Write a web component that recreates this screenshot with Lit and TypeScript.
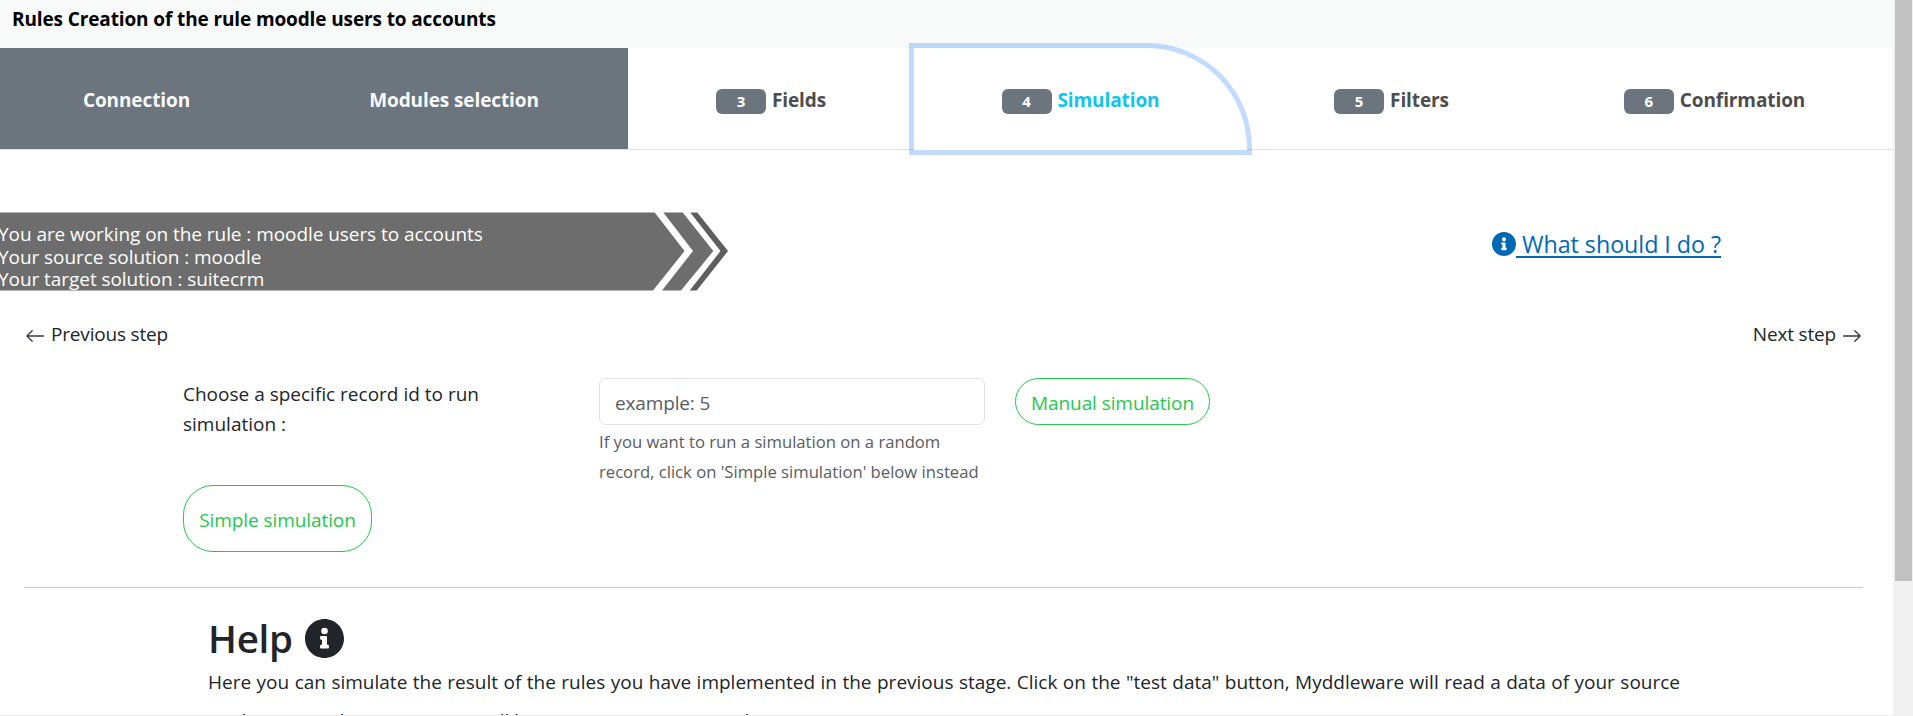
import { LitElement, html, css } from "lit";
import { customElement, state } from "lit/decorators.js";
import { classMap } from "lit/directives/class-map.js";

interface Step {
  n: number;
  label: string;
  state: "done" | "active" | "todo";
}

const infoIcon = html`<svg class="info" viewBox="8 8 496 496" aria-hidden="true">
  <path fill="currentColor" d="M256 8C119 8 8 119 8 256s111 248 248 248 248-111 248-248S393 8 256 8zm0 110a42 42 0 1 1 0 84 42 42 0 0 1 0-84zm56 254c0 7-5 12-12 12h-88c-7 0-12-5-12-12v-24c0-7 5-12 12-12h12v-64h-12c-7 0-12-5-12-12v-24c0-7 5-12 12-12h64c7 0 12 5 12 12v100h12c7 0 12 5 12 12z"/>
</svg>`;

const arrowLeft = html`<svg class="arrow" viewBox="0 0 18 12" aria-hidden="true">
  <path d="M17.6 6H1M6.2 .7.9 6l5.3 5.3"/>
</svg>`;

const arrowRight = html`<svg class="arrow" viewBox="0 0 18 12" aria-hidden="true">
  <path d="M.4 6H17M11.8 .7 17.1 6l-5.3 5.3"/>
</svg>`;

@customElement("app-root")
export class AppRoot extends LitElement {
  @state() private steps: Step[] = [
    { n: 1, label: "Connection", state: "done" },
    { n: 2, label: "Modules selection", state: "done" },
    { n: 3, label: "Fields", state: "todo" },
    { n: 4, label: "Simulation", state: "active" },
    { n: 5, label: "Filters", state: "todo" },
    { n: 6, label: "Confirmation", state: "todo" },
  ];

  static styles = css`
    :host {
      display: flex; width: 100%; height: 716px; overflow: hidden; background: #fff;
      font: 19px/30px "Open Sans", "Noto Sans", sans-serif; color: #212529;
    }
    * { box-sizing: border-box; }
    h2, p { margin: 0; }
    .page { flex: 1; min-width: 0; height: 716px; overflow: hidden; border-bottom: 1px solid #eeeeee; }
    .scrollbar { width: 20px; flex: none; background: #f1f1f1; padding: 0 1px 0 2px; }
    .thumb { height: 581px; background: #c1c1c1; }

    .title { height: 48px; padding: 4px 0 0 12px; background: #f8faf9; color: #000; font-weight: 700; letter-spacing: -0.12px; }

    .tabs { display: grid; grid-template-columns: 273px 355px 286px 333px 289px 357px; height: 102px; border-bottom: 1px solid #dee2e6; font-weight: 700; letter-spacing: -0.1px; }
    .tab { display: flex; align-items: center; justify-content: center; gap: 6px; height: 101px; padding-top: 3px; color: #4d4d4d; white-space: nowrap; }
    .tab.done { background: #6c757d; color: #f8f9fa; }
    .tab.done + .tab.done { padding-left: 7px; }
    .tab.active { height: 102px; padding-top: 2px; background: #fff; color: #0dc5ee; border-top-right-radius: 100px; box-shadow: 0 0 0 5px rgba(13, 110, 253, .25); z-index: 1; }
    .badge { width: 50px; height: 25px; border-radius: 6px; background: #6c757d; color: #fff; font-size: 15px; line-height: 25px; text-align: center; margin-top: 3px; }

    .context { display: flex; justify-content: space-between; margin-top: 62px; height: 79px; }
    .banner { display: grid; width: 728px; height: 79px; }
    .banner > * { grid-area: 1 / 1; }
    .shape { width: 728px; height: 79px; display: block; }
    .lines { padding-top: 11px; margin-left: -2px; color: #fff; line-height: 22.7px; letter-spacing: -0.06px; z-index: 1; }
    .hint { display: flex; align-items: flex-start; height: 32px; margin: 17px 172px 0 0; font-size: 23.3px; line-height: 32px; letter-spacing: -0.05px; color: #0069b4; white-space: pre; }
    .hint .info { width: 24px; height: 24px; margin-top: 3px; }
    .hint span { text-decoration: underline; text-decoration-thickness: 2px; text-underline-offset: 3px; margin-top: -1px; }

    .nav { display: flex; justify-content: space-between; padding: 28px 32px 0 26px; letter-spacing: -0.18px; }
    .nav a { display: flex; align-items: center; gap: 7px; }
    .arrow { width: 18px; height: 12px; margin-top: 4px; fill: none; stroke: #343a40; stroke-width: 1.3; stroke-linecap: round; stroke-linejoin: round; }

    .form { display: grid; grid-template-columns: 386px 386px auto; column-gap: 30px; height: 107px; margin: 29px 0 0 183px; }
    .label { padding-top: 1px; }
    .field { display: flex; flex-direction: column; }
    .input { height: 47px; border: 1px solid #dee2e6; border-radius: 7px; padding: 9px 15px 0; line-height: 30px; color: #595c5f; letter-spacing: -0.15px; }
    .help-text { font-size: 16.65px; color: #595c5f; white-space: nowrap; padding-top: 2px; }
    .btn { display: inline-flex; align-items: center; justify-content: center; border: 1px solid #1ec94c; color: #1ec94c; background: #fff; white-space: nowrap; padding-top: 3px; letter-spacing: -0.08px; }
    .manual { width: 195px; height: 47px; border-radius: 24px; }
    .simple { width: 189px; height: 67px; border-radius: 30px; margin-left: 183px; }
    .actions { display: flex; }

    .rule { height: 1px; background: #c8c9ca; margin: 35px 30px 0 24px; }
    .help { padding: 26px 0 0 208px; width: 1680px; }
    .help h2 { display: flex; align-items: center; gap: 12px; height: 48px; font-size: 38.5px; line-height: 48px; font-weight: 600; letter-spacing: -0.3px; }
    .help h2 .info { width: 39px; height: 39px; margin-top: 1px; }
    .help p { line-height: 39px; text-align: justify; margin-top: 1px; }
  `;

  private tab(s: Step) {
    return html`<div class=${classMap({ tab: true, [s.state]: true })}>
      ${s.state === "done" ? null : html`<span class="badge">${s.n}</span>`}<span>${s.label}</span>
    </div>`;
  }

  render() {
    return html`
      <main class="page">
        <div class="title">Rules Creation of the rule moodle users to accounts</div>
        <nav class="tabs">${this.steps.map((s) => this.tab(s))}</nav>

        <section class="context">
          <div class="banner">
            <svg class="shape" viewBox="0 0 728 79" aria-hidden="true">
              <g fill="#6d6d6d">
                <path d="M0 .4H654.7L684.5 39 653 78.6H0z"/>
                <path d="M663.3 .4H682.7L713.3 39 681 78.6H662L693 39z"/>
              </g>
              <path fill="#5e5e5e" d="M690.3 .4H697.3L728 39 696.7 78.6H689.7L720.5 39z"/>
            </svg>
            <div class="lines">
              <div>You are working on the rule : moodle users to accounts</div>
              <div>Your source solution : moodle</div>
              <div>Your target solution : suitecrm</div>
            </div>
          </div>
          <a class="hint">${infoIcon}<span> What should I do ?</span></a>
        </section>

        <div class="nav">
          <a>${arrowLeft}<span>Previous step</span></a>
          <a><span>Next step</span>${arrowRight}</a>
        </div>

        <section class="form">
          <div class="label">Choose a specific record id to run<br>simulation :</div>
          <div class="field">
            <div class="input">example: 5</div>
            <div class="help-text">If you want to run a simulation on a random<br>record, click on 'Simple simulation' below instead</div>
          </div>
          <div class="btn manual">Manual simulation</div>
        </section>
        <div class="actions"><div class="btn simple">Simple simulation</div></div>

        <div class="rule"></div>

        <section class="help">
          <h2><span>Help</span>${infoIcon}</h2>
          <p>Here you can simulate the result of the rules you have implemented in the previous stage. Click on the "test data" button, Myddleware will read a data of your source application and present it as it will be sent to your target application.</p>
        </section>
      </main>
      <div class="scrollbar"><div class="thumb"></div></div>
    `;
  }
}
